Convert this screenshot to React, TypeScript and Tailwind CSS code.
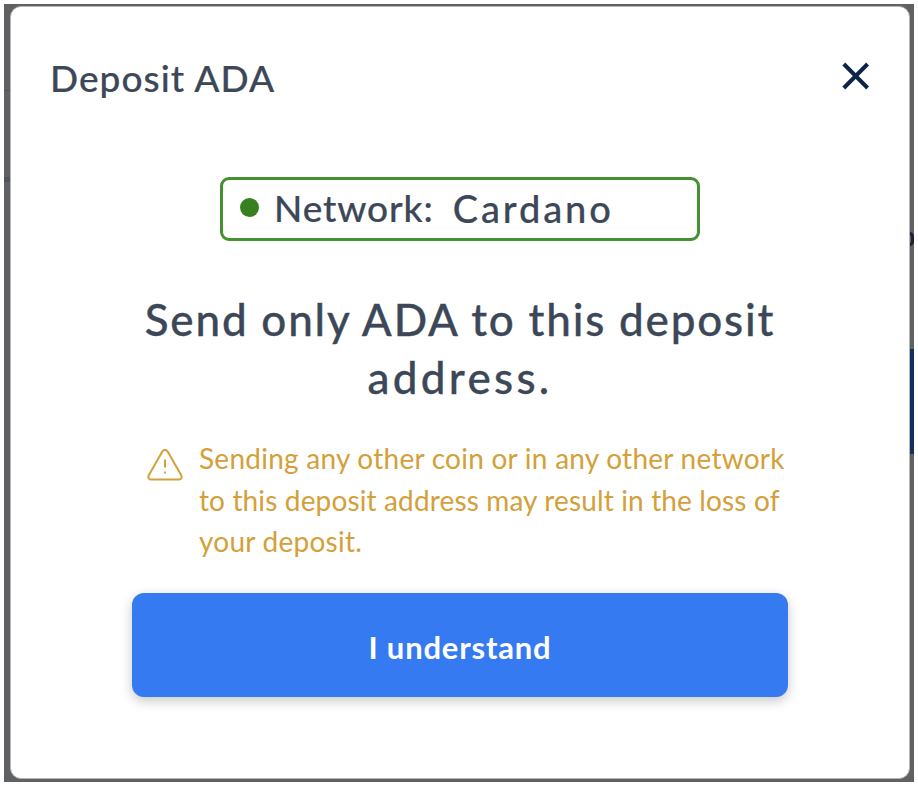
import React from "react";

function CloseIcon() {
	return (
		<svg width="28" height="28" viewBox="0 0 28 28" fill="none" stroke="#0d2548" strokeWidth="4">
			<path d="M1.8 2L25.6 26M25.6 2L1.8 26" />
		</svg>
	)
}

function WarningIcon() {
	return (
		<svg width="36" height="32" viewBox="0 0 36 32" fill="none" stroke="#d3a03a" strokeWidth="2">
			<path d="M15.2 2.8C16.5 .5 19.5 .5 20.8 2.8L34.2 26.2C35.4 28.4 34.1 30.6 31.6 30.6H4.4C1.9 30.6 .6 28.4 1.8 26.2Z" />
			<path d="M18 10.5V18.5M18 22.5V24.5" />
		</svg>
	)
}

export default function App() {
	return (
		<div className="h-[788px] w-[918px] overflow-hidden bg-white p-1 font-['Lato',sans-serif]">
			<div className="relative h-[778px] w-[910px] bg-[#606162] pt-0.5 pl-1.5">
				{/* page behind the dialog */}
				<div className="absolute top-[86px] left-0 h-px w-1.5 bg-[#505257]" />
				<div className="absolute top-[173px] left-0 h-[5px] w-1.5 bg-[#52545b]" />
				<div className="absolute top-[228px] right-0 h-[14px] w-[9px] rounded-full border-[3px] border-[#1c2235]" />
				<div className="absolute top-[345px] right-0 h-[105px] w-[5px] bg-[#12305f]" />

				<div className="relative flex h-[773px] w-[900px] flex-col rounded-[11px] border border-[#b5b6b7] bg-white">
					<div className="flex items-start justify-between pt-[50px] pr-[39px] pl-[39px]">
						<h1 className="pt-px text-[37px] leading-10 font-medium tracking-[1.05px] text-[#3c4858] [-webkit-text-stroke:0.2px_#3c4858]">
							Deposit ADA
						</h1>
						<button type="button" aria-label="Close" className="mt-[5px]">
							<CloseIcon />
						</button>
					</div>

					<div className="mt-[79px] ml-[209px] flex h-16 w-[480px] items-center rounded-[9px] border-3 border-[#459030] pb-[3px] pl-[17px]">
						<span className="mr-[15px] size-[19px] rounded-full bg-[#37801f]" />
						<p className="flex gap-[19px] text-[37px] leading-10 font-medium text-[#3c4858] [-webkit-text-stroke:0.2px_#3c4858]">
							<span className="tracking-[0.9px]">Network:</span>
							<span className="text-[38px] tracking-[2.9px]">Cardano</span>
						</p>
					</div>

					<h2 className="mt-[49px] text-center text-[44px] leading-[58px] font-medium tracking-[1.8px] text-[#3c4858] [-webkit-text-stroke:0.3px_#3c4858]">
						Send only ADA to this deposit
						<br />
						<span className="tracking-[3.3px]">address.</span>
					</h2>

					<div className="mt-8 ml-[136px] flex gap-4">
						<div className="mt-[11px]">
							<WarningIcon />
						</div>
						<p className="text-[28px] leading-[41.5px] whitespace-nowrap tracking-[0.25px] text-[#d3a03a]">
							Sending any other coin or in any other network
							<br />
							<span className="tracking-[0.14px]">to this deposit address may result in the loss of</span>
							<br />
							your deposit.
						</p>
					</div>

					<button
						type="button"
						className="mt-[30px] ml-[121px] h-[104px] w-[656px] shrink-0 rounded-xl bg-[#357af0] pt-[5px] text-[31px] font-bold tracking-[0.8px] text-white shadow-[0_4px_12px_rgba(0,0,0,0.22)]"
					>
						I understand
					</button>
				</div>
			</div>
		</div>
	)
}
